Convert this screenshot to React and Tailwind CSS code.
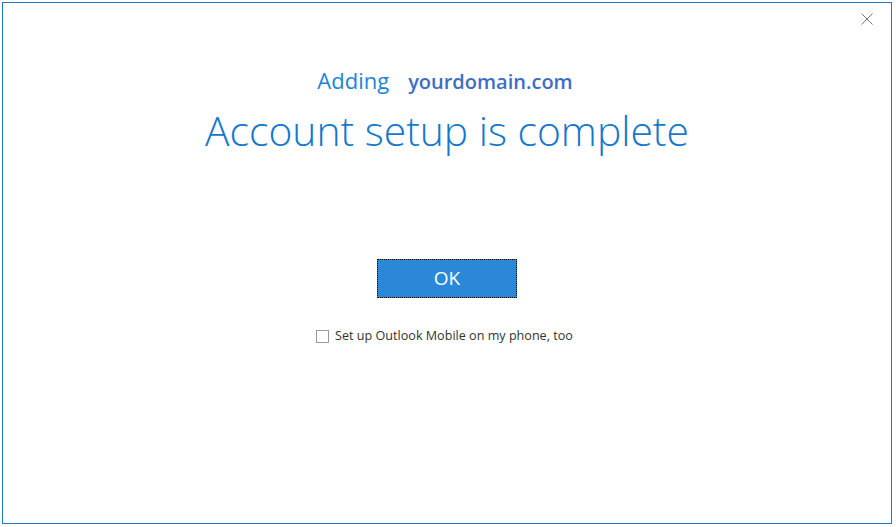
import { useState } from "react";

export default function App() {
  const [mobile, setMobile] = useState(false);

  return (
    <div className="w-[896px] h-[527px] bg-white pt-[2px] pl-[2px]" style={{ fontFamily: '"Open Sans", "Noto Sans", sans-serif' }}>
      <div className="relative w-[890px] h-[522px] border border-[#1979ca] bg-white flex flex-col items-center">
        <button className="absolute top-[9px] right-[17px] w-[14px] h-[14px] flex items-center justify-center text-[#777]">
          <svg width="12" height="12" viewBox="0 0 12 12" fill="none" stroke="currentColor" strokeWidth="1">
            <path d="M0.5 0.5 L11.5 11.5 M11.5 0.5 L0.5 11.5" />
          </svg>
        </button>

        <div className="mt-[61px] flex items-baseline gap-[19px] pr-[4px]">
          <span className="text-[22px] text-[#1f83d4]">Adding</span>
          <span className="text-[20px] font-semibold text-[#3d6ec6]">yourdomain.com</span>
        </div>

        <h1 className="mt-[3px] text-[40.8px] font-light leading-[60px] text-[#1478cc]">
          Account setup is complete
        </h1>

        <button className="mt-[99px] w-[140px] h-[39px] bg-[#2b88d8] border border-dotted border-black text-white text-[19px] leading-none">
          OK
        </button>

        <label className="mt-[29px] mr-[5px] flex items-center gap-[6px] text-[12.6px] text-[#333] cursor-pointer">
          <input
            type="checkbox"
            checked={mobile}
            onChange={(e) => setMobile(e.target.checked)}
            className="appearance-none w-[13px] h-[13px] border border-[#999] bg-white"
          />
          Set up Outlook Mobile on my phone, too
        </label>
      </div>
    </div>
  );
}
